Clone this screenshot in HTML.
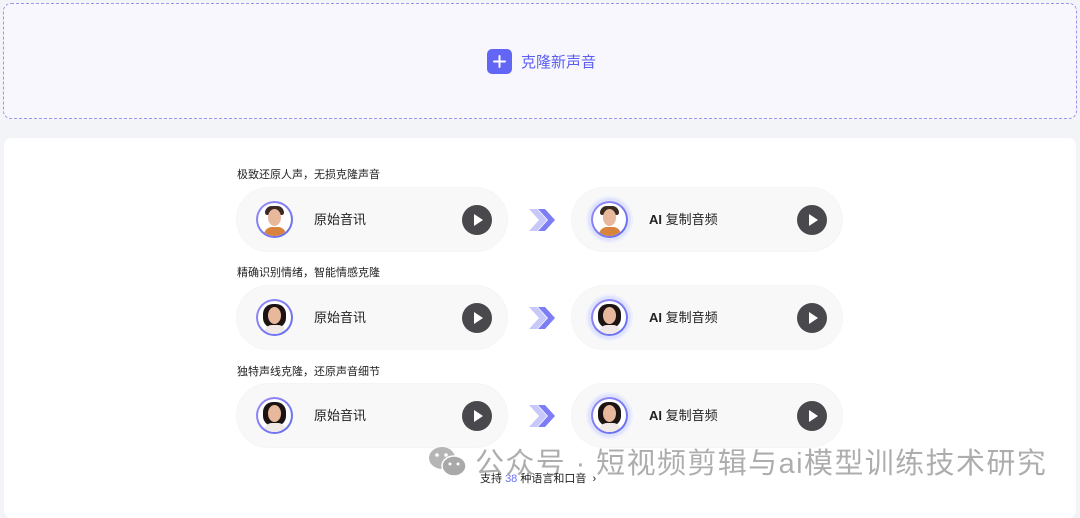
<!DOCTYPE html>
<html><head><meta charset="utf-8"><style>
*{margin:0;padding:0;box-sizing:border-box}
body{width:1080px;height:505px;background:#f3f4f8;position:relative;overflow:hidden;font-family:"Liberation Sans","Noto Sans CJK SC",sans-serif;color:#222}
.top{position:absolute;left:3px;top:3px;width:1074px;height:116px;border:1px dashed #9a96ee;border-radius:8px;background:#f8f7fe}
.add{position:absolute;left:487px;top:49px;width:25px;height:25px;border-radius:5px;background:#6365f5}
.addt{position:absolute;left:521px;top:51px;font-size:15px;color:#5b5ff0}
.panel{position:absolute;left:4px;top:138px;width:1072px;height:380px;background:#fff;border-radius:8px}
.lab{position:absolute;left:237px;font-size:11px;color:#222}
.pill{position:absolute;width:270px;height:63px;border-radius:32px;background:#f8f8f9;box-shadow:0 0 0 1px #f5f5f6}
.av{position:absolute;left:19px;top:13px;width:37px;height:37px;border-radius:50%;background:linear-gradient(135deg,#9b8cf7,#5f6cf0);padding:2px}
.av2{left:19px;box-shadow:0 0 0 3px #dfe3fb,0 0 0 5px #eef0fd}
.face{width:100%;height:100%;border-radius:50%;background:#fff;position:relative;overflow:hidden}
.face i{position:absolute;left:10px;top:6px;width:13px;height:17px;border-radius:50%;background:#e8b89c}
.face b{position:absolute;left:7px;top:3px;width:19px;height:9px;border-radius:9px 9px 3px 3px;background:#3a2a22}
.face u{position:absolute;left:6px;top:24px;width:22px;height:12px;border-radius:8px 8px 0 0;background:#d9843e}
.f2 b{height:24px;border-radius:10px;left:5px;width:23px;background:#1c1412}
.f2 i{z-index:1}
.f2 u{background:#f1e9e6}
.t{position:absolute;left:77px;top:21px;font-size:13px;color:#222}
.t b{font-weight:bold}
.play{position:absolute;left:225px;top:17px;width:30px;height:30px;border-radius:50%;background:#48484d}
.play:after{content:"";position:absolute;left:12px;top:9px;border-left:9px solid #fff;border-top:6px solid transparent;border-bottom:6px solid transparent}
.arr{position:absolute;left:527px}
.wm{position:absolute;left:475px;top:440px;font-size:29px;color:rgba(0,0,0,.32);letter-spacing:1.4px;white-space:nowrap}
.sup{position:absolute;left:480px;top:470px;font-size:11px;color:#222}
</style></head><body>
<div class="top"></div>
<div class="add"><svg width="25" height="25"><path d="M12.5 7v11M7 12.5h11" stroke="#fff" stroke-width="2" stroke-linecap="round"/></svg></div>
<div class="addt">克隆新声音</div>
<div class="panel"></div>

<div class="lab" style="top:166px">极致还原人声，无损克隆声音</div>
<div class="pill" style="left:237px;top:188px"><div class="av"><div class="face"><b></b><i></i><u></u></div></div><div class="t">原始音讯</div><div class="play"></div></div>
<svg class="arr" style="top:207px" width="30" height="26"><path d="M2 2l10 11-10 11h8l10-11-10-11z" fill="#c8c8fb"/><path d="M11 2l10 11-10 11h7l10-11-10-11z" fill="#7d7ef5"/></svg>
<div class="pill" style="left:572px;top:188px"><div class="av av2"><div class="face"><b></b><i></i><u></u></div></div><div class="t"><b>AI</b> 复制音频</div><div class="play"></div></div>

<div class="lab" style="top:264px">精确识别情绪，智能情感克隆</div>
<div class="pill" style="left:237px;top:286px"><div class="av"><div class="face f2"><b></b><i></i><u></u></div></div><div class="t">原始音讯</div><div class="play"></div></div>
<svg class="arr" style="top:305px" width="30" height="26"><path d="M2 2l10 11-10 11h8l10-11-10-11z" fill="#c8c8fb"/><path d="M11 2l10 11-10 11h7l10-11-10-11z" fill="#7d7ef5"/></svg>
<div class="pill" style="left:572px;top:286px"><div class="av av2"><div class="face f2"><b></b><i></i><u></u></div></div><div class="t"><b>AI</b> 复制音频</div><div class="play"></div></div>

<div class="lab" style="top:363px">独特声线克隆，还原声音细节</div>
<div class="pill" style="left:237px;top:384px"><div class="av"><div class="face f2"><b></b><i></i><u></u></div></div><div class="t">原始音讯</div><div class="play"></div></div>
<svg class="arr" style="top:403px" width="30" height="26"><path d="M2 2l10 11-10 11h8l10-11-10-11z" fill="#c8c8fb"/><path d="M11 2l10 11-10 11h7l10-11-10-11z" fill="#7d7ef5"/></svg>
<div class="pill" style="left:572px;top:384px"><div class="av av2"><div class="face f2"><b></b><i></i><u></u></div></div><div class="t"><b>AI</b> 复制音频</div><div class="play"></div></div>

<svg style="position:absolute;left:428px;top:445px" width="40" height="34"><ellipse cx="14" cy="13" rx="13" ry="11" fill="#b5b5b5"/><ellipse cx="26" cy="21" rx="12" ry="10" fill="#a9a9a9" stroke="#fff" stroke-width="1.5"/><circle cx="9" cy="10" r="1.8" fill="#fff"/><circle cx="18" cy="10" r="1.8" fill="#fff"/><circle cx="22" cy="19" r="1.5" fill="#fff"/><circle cx="30" cy="19" r="1.5" fill="#fff"/></svg>
<div class="wm">公众号 · 短视频剪辑与ai模型训练技术研究</div>
<div class="sup">支持 <span style="color:#6b6ff5">38</span> 种语言和口音 &nbsp;›</div>
</body></html>
